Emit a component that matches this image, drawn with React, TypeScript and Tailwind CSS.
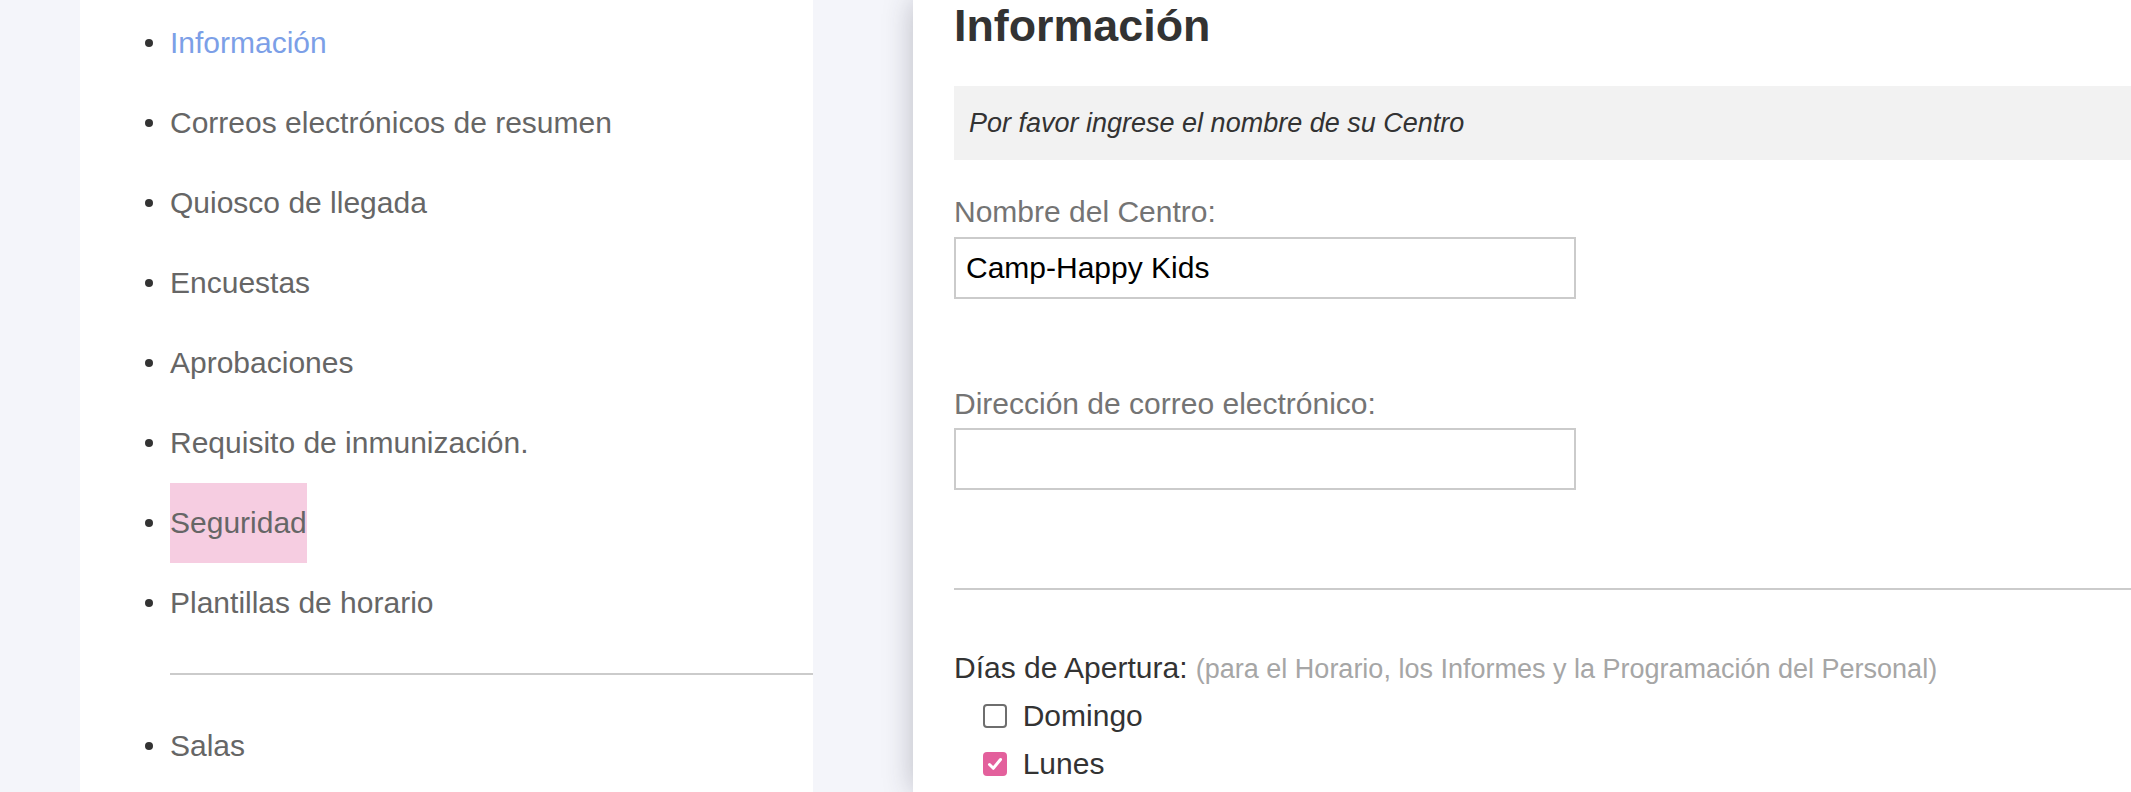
import React from "react";

const items = [
  "Información",
  "Correos electrónicos de resumen",
  "Quiosco de llegada",
  "Encuestas",
  "Aprobaciones",
  "Requisito de inmunización.",
  "Seguridad",
  "Plantillas de horario",
];

function Row({ label, active, highlight }: { label: string; active?: boolean; highlight?: boolean }) {
  return (
    <li className="flex h-[80px] items-stretch">
      <div className="w-[90px] shrink-0 flex items-center">
        <span className="block w-[8px] h-[8px] rounded-full bg-[#333333] ml-[65px]" />
      </div>
      <span
        className={
          "flex items-center " +
          (active ? "text-[#7c9fe7] " : "text-[#666666] ") +
          (highlight ? "bg-[#f6cde1]" : "")
        }
      >
        {label}
      </span>
    </li>
  );
}

function Checkbox({ checked, label }: { checked?: boolean; label: string }) {
  return (
    <div className="flex items-center h-[47.7px] pl-[28.7px]">
      {checked ? (
        <span className="w-[24px] h-[24px] rounded-[4px] bg-[#e3609c] flex items-center justify-center">
          <svg width="18" height="18" viewBox="0 0 18 18">
            <path d="M3.5 9.5 L7.3 13.3 L14.5 4.5" fill="none" stroke="white" strokeWidth="3" strokeLinecap="round" strokeLinejoin="round" />
          </svg>
        </span>
      ) : (
        <span className="w-[24px] h-[24px] rounded-[4px] border-2 border-[#6e6e6e] bg-white" />
      )}
      <span className="ml-[16px] text-[#333333]">{label}</span>
    </div>
  );
}

export default function App() {
  return (
    <div
      className="w-[2131px] h-[792px] overflow-hidden flex bg-[#f4f5fa] text-[30px] leading-[34px]"
      style={{ fontFamily: '"Liberation Sans", Arial, sans-serif' }}
    >
      <div className="w-[80px] shrink-0" />
      <div className="w-[733px] shrink-0 bg-white">
        <ul className="pt-[3px]">
          {items.map((it, i) => (
            <Row key={it} label={it} active={i === 0} highlight={it === "Seguridad"} />
          ))}
        </ul>
        <div className="ml-[90px] mt-[30px] h-[2px] bg-[#cbcbcb]" />
        <ul className="mt-[31px]">
          <Row label="Salas" />
        </ul>
      </div>
      <div className="w-[100px] shrink-0" />
      <div className="flex-1 bg-white pl-[41px] shadow-[0_0_28px_rgba(40,40,60,0.28)] relative min-w-0">
        <h1 className="text-[44.8px] leading-[51px] font-bold text-[#333333]">Información</h1>
        <div className="mt-[35px] h-[74px] bg-[#f2f2f2] flex items-center pl-[15px]">
          <span className="italic text-[27px] text-[#333333]">Por favor ingrese el nombre de su Centro</span>
        </div>
        <div className="mt-[35px] text-[#747474]">Nombre del Centro:</div>
        <div className="mt-[7.5px] w-[622px] h-[62.5px] border-2 border-[#cbcbcb] flex items-center pl-[10px] text-black">
          Camp-Happy Kids
        </div>
        <div className="mt-[87.6px] text-[#747474]">Dirección de correo electrónico:</div>
        <div className="mt-[7.4px] w-[622px] h-[62.5px] border-2 border-[#cbcbcb]" />
        <div className="mt-[98px] h-[2px] bg-[#cbcbcb]" />
        <div className="mt-[60.6px] text-[#333333]">
          Días de Apertura: <span className="text-[27px] text-[#a6a6a6]">(para el Horario, los Informes y la Programación del Personal)</span>
        </div>
        <div className="mt-[6.5px]">
          <Checkbox label="Domingo" />
          <Checkbox checked label="Lunes" />
        </div>
      </div>
    </div>
  );
}
